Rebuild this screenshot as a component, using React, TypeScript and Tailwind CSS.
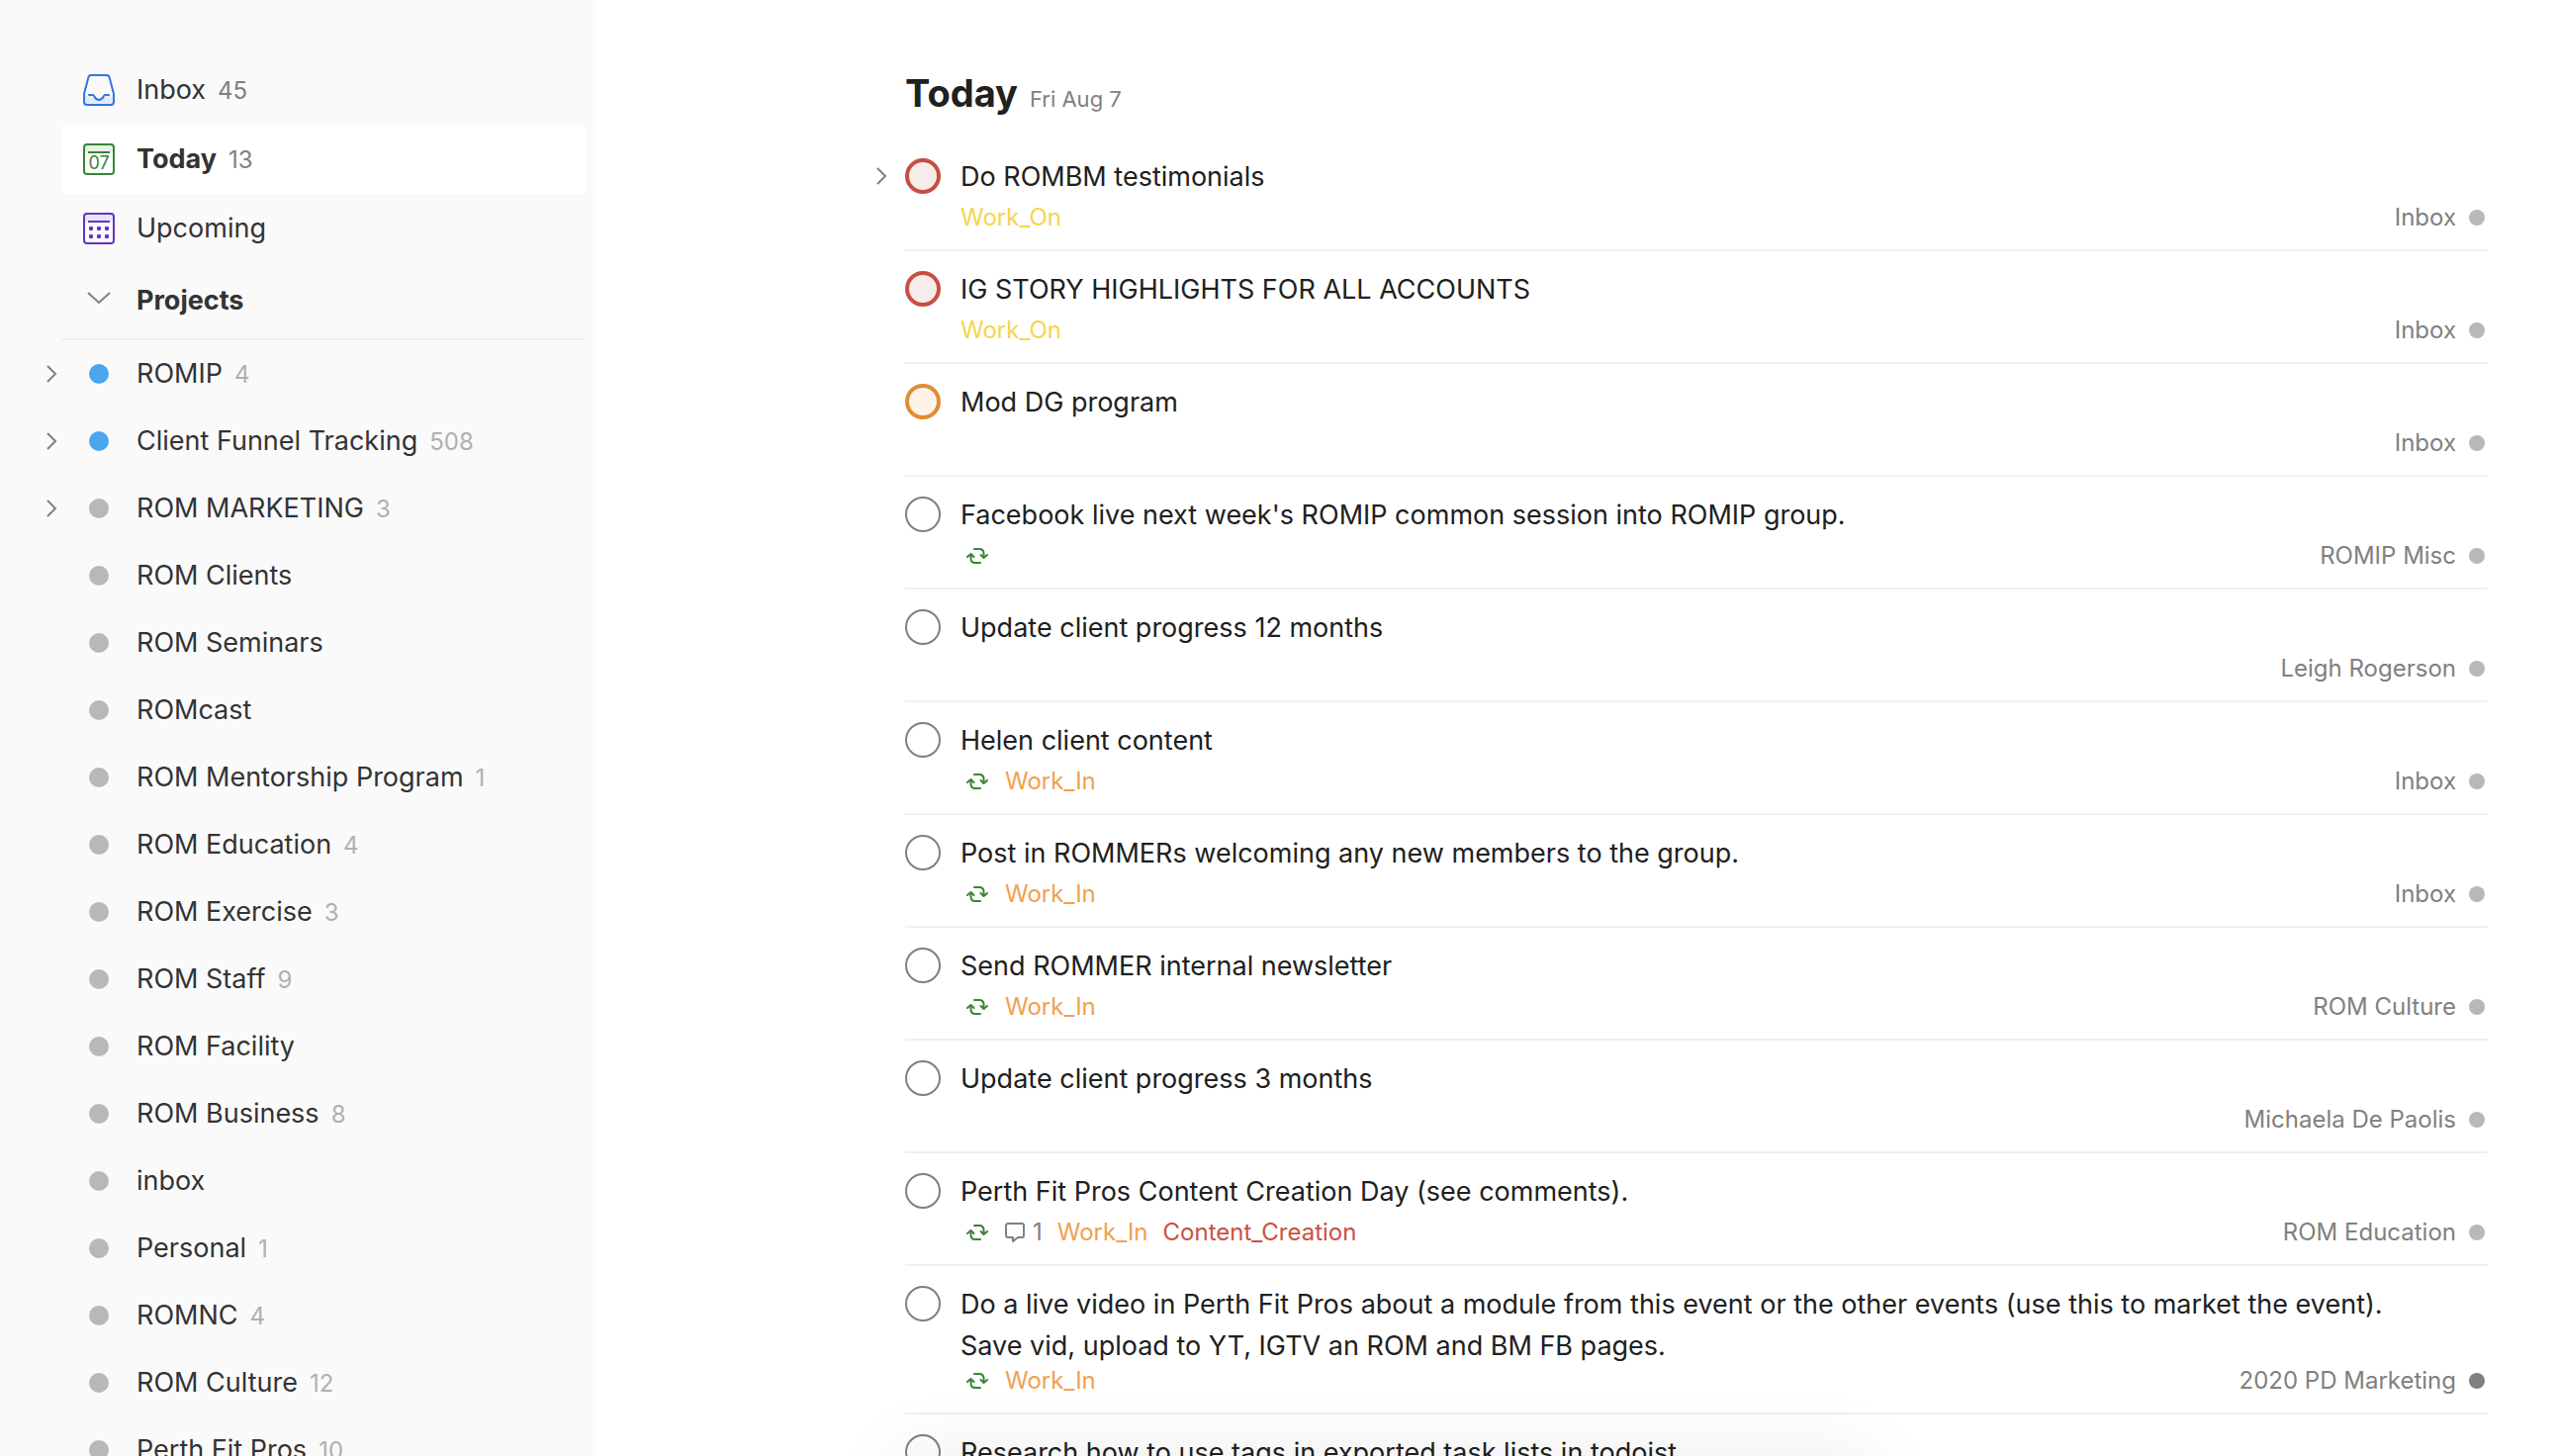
import { useState } from 'react';

type Project = {
  name: string;
  count?: number;
  color?: string;
  expandable?: boolean;
};

type Task = {
  title: string;
  priority?: 'red' | 'orange';
  expandable?: boolean;
  recurring?: boolean;
  comments?: number;
  labels?: { name: string; color: string }[];
  project: string;
  dot?: string;
};

const BLUE = 'bg-[#4aa7ee]';
const GREY = 'bg-[#b8b8b8]';

const workOn = { name: 'Work_On', color: 'text-[#f5d44f]' };
const workIn = { name: 'Work_In', color: 'text-[#f29f4f]' };
const contentCreation = { name: 'Content_Creation', color: 'text-[#cd4f43]' };

const projects: Project[] = [
  { name: 'ROMIP', count: 4, color: BLUE, expandable: true },
  { name: 'Client Funnel Tracking', count: 508, color: BLUE, expandable: true },
  { name: 'ROM MARKETING', count: 3, expandable: true },
  { name: 'ROM Clients' },
  { name: 'ROM Seminars' },
  { name: 'ROMcast' },
  { name: 'ROM Mentorship Program', count: 1 },
  { name: 'ROM Education', count: 4 },
  { name: 'ROM Exercise', count: 3 },
  { name: 'ROM Staff', count: 9 },
  { name: 'ROM Facility' },
  { name: 'ROM Business', count: 8 },
  { name: 'inbox' },
  { name: 'Personal', count: 1 },
  { name: 'ROMNC', count: 4 },
  { name: 'ROM Culture', count: 12 },
  { name: 'Perth Fit Pros', count: 10 },
];

const tasks: Task[] = [
  { title: 'Do ROMBM testimonials', priority: 'red', expandable: true, labels: [workOn], project: 'Inbox' },
  { title: 'IG STORY HIGHLIGHTS FOR ALL ACCOUNTS', priority: 'red', labels: [workOn], project: 'Inbox' },
  { title: 'Mod DG program', priority: 'orange', project: 'Inbox' },
  { title: "Facebook live next week's ROMIP common session into ROMIP group.", recurring: true, project: 'ROMIP Misc' },
  { title: 'Update client progress 12 months', project: 'Leigh Rogerson' },
  { title: 'Helen client content', recurring: true, labels: [workIn], project: 'Inbox' },
  { title: 'Post in ROMMERs welcoming any new members to the group.', recurring: true, labels: [workIn], project: 'Inbox' },
  { title: 'Send ROMMER internal newsletter', recurring: true, labels: [workIn], project: 'ROM Culture' },
  { title: 'Update client progress 3 months', project: 'Michaela De Paolis' },
  {
    title: 'Perth Fit Pros Content Creation Day (see comments).',
    recurring: true,
    comments: 1,
    labels: [workIn, contentCreation],
    project: 'ROM Education',
  },
  {
    title:
      'Do a live video in Perth Fit Pros about a module from this event or the other events (use this to market the event). Save vid, upload to YT, IGTV an ROM and BM FB pages.',
    recurring: true,
    labels: [workIn],
    project: '2020 PD Marketing',
    dot: 'bg-[#808080]',
  },
  { title: 'Research how to use tags in exported task lists in todoist', project: 'Inbox' },
];

const priorityStyles = {
  red: 'border-4 border-[#c64f42] bg-[#f8ecea]',
  orange: 'border-4 border-[#e08d33] bg-[#fdf3e9]',
  none: 'border-2 border-[#808080]',
};

function InboxIcon() {
  return (
    <svg viewBox="0 0 32 32" className="h-8 w-8" fill="none" stroke="#3474e0" strokeWidth="2" strokeLinejoin="round">
      <path d="M1 21h9.500c1 0 1.200 5 5.500 5s4.500-5 5.500-5H31v7c0 2-1 3-3 3H4c-2 0-3-1-3-3z" fill="#e4ebf8" stroke="none" />
      <path d="M5.300 3.400C5.700 1.700 6.600 1 8 1h16c1.400 0 2.300.7 2.700 2.400L31 20v8c0 2-1 3-3 3H4c-2 0-3-1-3-3v-8z" />
      <path d="M6 21h4c1.500 0 1.500 5 6 5s4.500-5 6-5h4" strokeLinecap="round" />
    </svg>
  );
}

function TodayIcon() {
  return (
    <svg viewBox="0 0 32 32" className="h-8 w-8" fill="none" stroke="#3a8436" strokeWidth="2">
      <path d="M2 2h28v7H2z" fill="#e7f0e6" stroke="none" />
      <rect x="1" y="1" width="30" height="30" rx="3" />
      <path d="M5 9h22" />
      <text x="16" y="26" textAnchor="middle" fontSize="18" fill="#3a8436" stroke="none">
        07
      </text>
    </svg>
  );
}

function UpcomingIcon() {
  return (
    <svg viewBox="0 0 32 32" className="h-8 w-8" fill="none" stroke="#6035be" strokeWidth="2">
      <path d="M2 2h28v7H2z" fill="#eae5f4" stroke="none" />
      <rect x="1" y="1" width="30" height="30" rx="3" />
      <path d="M5 9h22" />
      <g fill="#6035be" stroke="none">
        <circle cx="8" cy="16" r="2.200" />
        <circle cx="16" cy="16" r="2.200" />
        <circle cx="24" cy="16" r="2.200" />
        <circle cx="8" cy="24" r="2.200" />
        <circle cx="16" cy="24" r="2.200" />
        <circle cx="24" cy="24" r="2.200" />
      </g>
    </svg>
  );
}

function ChevronRight() {
  return (
    <svg viewBox="0 0 24 24" className="h-6 w-6" fill="none" stroke="#808080" strokeWidth="2">
      <path d="M8 4l8 8-8 8" />
    </svg>
  );
}

function ChevronDown() {
  return (
    <svg viewBox="0 0 32 32" className="h-8 w-8" fill="none" stroke="#808080" strokeWidth="2">
      <path d="M5 8l11 10L27 8" />
    </svg>
  );
}

function RecurringIcon() {
  return (
    <svg viewBox="0 0 24 24" className="h-6 w-6" fill="none" stroke="#3a8436" strokeWidth="2" strokeLinecap="round" strokeLinejoin="round">
      <path d="M8 5h5c3 0 4.500 1.500 4.500 4.500V13" />
      <path d="M14.500 11l3 3 3.500-3" />
      <path d="M14 19H9c-3 0-4.500-1.500-4.500-4.500V11" />
      <path d="M1 13l3.500-3 3 3" />
    </svg>
  );
}

function CommentIcon() {
  return (
    <svg viewBox="0 0 20 20" className="h-5 w-5" fill="none" stroke="#808080" strokeWidth="2" strokeLinejoin="round">
      <path d="M3 1h14c1.300 0 2 .7 2 2v10c0 1.300-.7 2-2 2h-4l-5 4v-4H3c-1.300 0-2-.7-2-2V3c0-1.300.7-2 2-2z" />
    </svg>
  );
}

function NavItem({ icon, label, count, active = false }: { icon: React.ReactNode; label: string; count?: number; active?: boolean }) {
  return (
    <a href="#" className={`flex h-[70px] items-center gap-[22px] rounded-md pl-[22px] ${active ? 'bg-white' : ''}`}>
      {icon}
      <span className="flex items-baseline gap-3">
        <span className={active ? 'font-bold' : ''}>{label}</span>
        {count && <span className="text-2xl text-[#808080]">{count}</span>}
      </span>
    </a>
  );
}

function ProjectRow({ project }: { project: Project }) {
  return (
    <li className="flex h-[68px] items-center">
      <div className="mr-5 w-6">
        {project.expandable && (
          <button type="button" aria-label={`Expand ${project.name}`} className="block">
            <ChevronRight />
          </button>
        )}
      </div>
      <a href="#" className="flex items-center gap-[22px]">
        <span className="flex w-8 justify-center">
          <span className={`h-5 w-5 rounded-full ${project.color ?? GREY}`} />
        </span>
        <span className="flex items-baseline gap-3">
          {project.name}
          {project.count && <span className="text-2xl text-[#b0b0b0]">{project.count}</span>}
        </span>
      </a>
    </li>
  );
}

function TaskRow({ task }: { task: Task }) {
  const [done, setDone] = useState(false);

  return (
    <li className="flex">
      <div className="w-9 shrink-0 pt-[26px]">
        {task.expandable && (
          <button type="button" aria-label="Expand sub-tasks" className="block">
            <ChevronRight />
          </button>
        )}
      </div>
      <div className="flex-1 border-b-2 border-[#f0f0f0] pt-[18px] pb-[18px]">
        <label className="flex min-h-12 gap-5 pr-12 leading-[42px]">
          <input
            type="checkbox"
            checked={done}
            onChange={() => setDone(!done)}
            className={`mt-[2px] h-9 w-9 shrink-0 appearance-none rounded-full ${priorityStyles[task.priority ?? 'none']}`}
          />
          <span>{task.title}</span>
        </label>
        <div className="flex h-7 items-center gap-[15px] pl-14 text-2xl">
          {task.recurring && (
            <span className="pl-[6px]">
              <RecurringIcon />
            </span>
          )}
          {task.comments && (
            <a href="#" className="flex items-center gap-2 text-[#808080]">
              <CommentIcon />
              {task.comments}
            </a>
          )}
          {task.labels?.map((label) => (
            <a key={label.name} href="#" className={label.color}>
              {label.name}
            </a>
          ))}
          <a href="#" className="ml-auto flex items-center gap-[10px] text-[#808080]">
            {task.project}
            <span className="flex w-[22px] justify-center">
              <span className={`h-4 w-4 rounded-full ${task.dot ?? GREY}`} />
            </span>
          </a>
        </div>
      </div>
    </li>
  );
}

export default function App() {
  return (
    <div className="relative flex h-screen overflow-hidden bg-white font-[Inter,'Liberation_Sans',sans-serif] text-[27px] text-[#202020]">
      {/* Sidebar */}
      <aside className="w-[602px] shrink-0 bg-[#fafafa] pt-14 pr-[10px] pl-10 text-[#333333]">
        <nav className="ml-[22px]">
          <NavItem icon={<InboxIcon />} label="Inbox" count={45} />
          <NavItem icon={<TodayIcon />} label="Today" count={13} active />
          <NavItem icon={<UpcomingIcon />} label="Upcoming" />
        </nav>
        <button type="button" className="ml-[22px] flex h-[78px] w-[calc(100%-22px)] items-center gap-[22px] border-b-2 border-[#f0f0f0] pl-[22px] font-bold">
          <ChevronDown />
          Projects
        </button>
        <ul>
          {projects.map((project) => (
            <ProjectRow key={project.name} project={project} />
          ))}
        </ul>
      </aside>

      {/* Task list */}
      <main className="min-w-0 flex-1 pt-[70px] pr-[71px] pl-[277px]">
        <header className="mb-[22px] flex items-baseline gap-3 pl-9">
          <h1 className="text-[38px] leading-[48px] font-bold">Today</h1>
          <span className="text-[22px] leading-6 text-[#808080]">Fri Aug 7</span>
        </header>
        <ul>
          {tasks.map((task) => (
            <TaskRow key={task.title} task={task} />
          ))}
        </ul>
      </main>

      {/* Shadow of the toast waiting below the fold */}
      <div className="pointer-events-none absolute top-full left-[910px] h-24 w-[980px] rounded-lg shadow-[0_0_80px_rgba(0,0,0,0.08)]" />
    </div>
  );
}
